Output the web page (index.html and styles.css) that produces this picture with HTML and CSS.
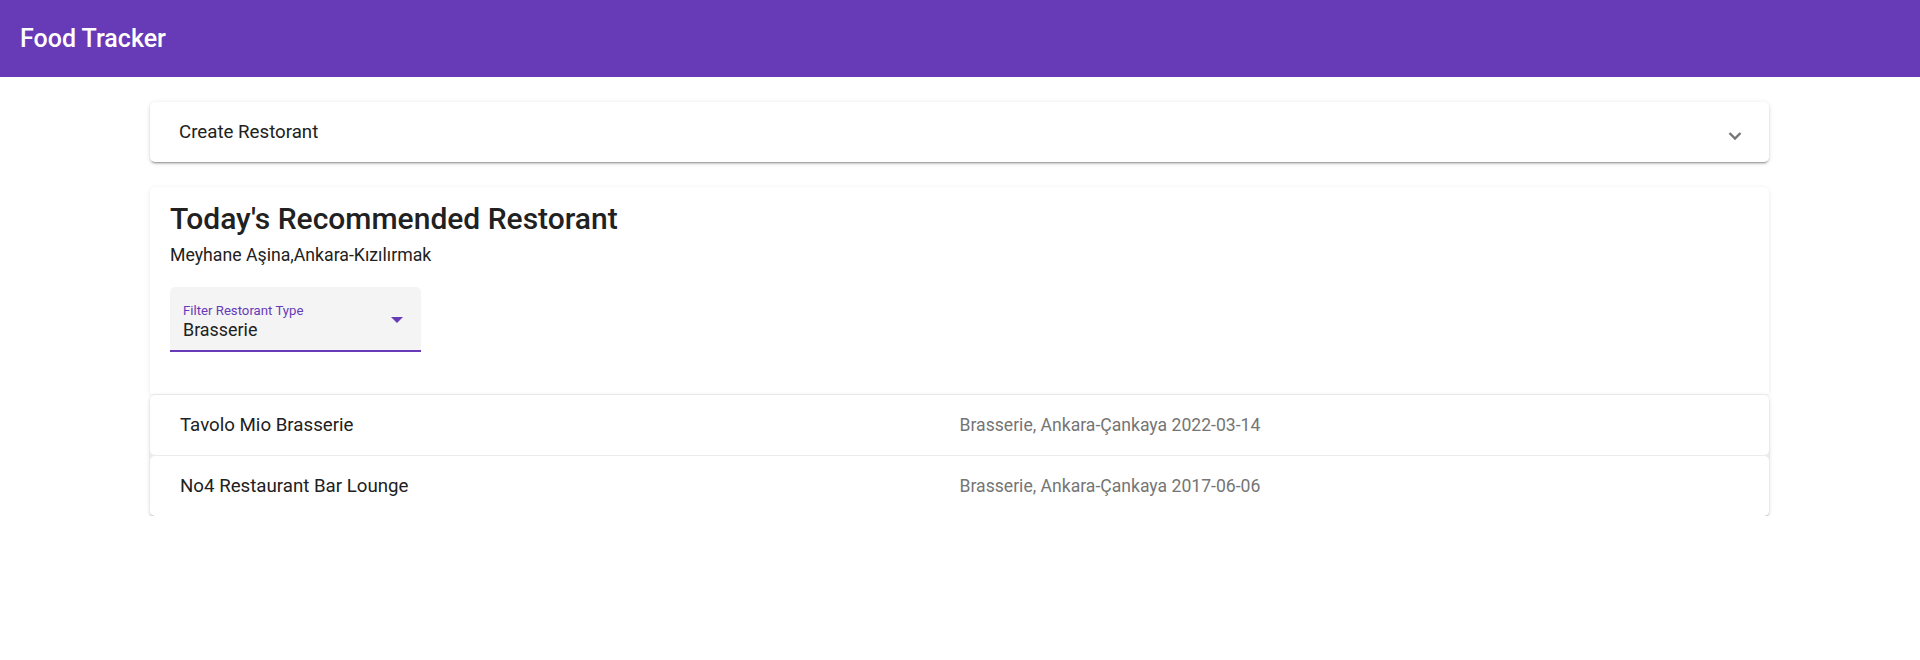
FILE: index.html
```html
<!DOCTYPE html>
<html lang="en">
<head>
<meta charset="utf-8">
<title>Food Tracker</title>
<link rel="stylesheet" href="styles.css">
</head>
<body>
<header class="toolbar">
  <span class="app-title">Food Tracker</span>
</header>
<main class="content">
  <section class="panel create-panel">
    <span class="panel-title">Create Restorant</span>
    <svg class="chevron" width="14" height="10" viewBox="0 0 14 10" aria-hidden="true">
      <path d="M1.5 2 L7 7.5 L12.5 2" fill="none" stroke="#757575" stroke-width="2.4"/>
    </svg>
  </section>

  <section class="panel recommend-card">
    <h1 class="rec-title">Today's Recommended Restorant</h1>
    <p class="rec-sub">Meyhane Aşina,Ankara-Kızılırmak</p>
    <div class="select-field">
      <div class="select-inner">
        <span class="select-label">Filter Restorant Type</span>
        <span class="select-value">Brasserie</span>
      </div>
      <svg class="select-arrow" width="12" height="6" viewBox="0 0 12 6" aria-hidden="true">
        <path d="M0 0 L12 0 L6 6 Z" fill="#673ab7"/>
      </svg>
    </div>
  </section>

  <div class="list">
    <div class="row">
      <span class="row-name">Tavolo Mio Brasserie</span>
      <span class="row-meta">Brasserie, Ankara-Çankaya 2022-03-14</span>
    </div>
    <div class="row">
      <span class="row-name">No4 Restaurant Bar Lounge</span>
      <span class="row-meta">Brasserie, Ankara-Çankaya 2017-06-06</span>
    </div>
  </div>
</main>
</body>
</html>
```

FILE: styles.css
```css
* { box-sizing: border-box; }

body {
  margin: 0;
  font-family: Roboto, "Noto Sans", sans-serif;
  color: #212121;
  background: #ffffff;
}

.toolbar {
  height: 77px;
  background: #673ab7;
  display: flex;
  align-items: center;
  padding: 0 20px;
}

.app-title {
  color: #ffffff;
  font-size: 25px;
  font-weight: 500;
}

.content {
  padding: 25px 151px 0 150px;
}

.panel {
  background: #ffffff;
  border-radius: 5px;
  box-shadow: 0 3px 1px -2px rgba(0,0,0,.2), 0 2px 2px 0 rgba(0,0,0,.14), 0 1px 5px 0 rgba(0,0,0,.12);
}

.create-panel {
  height: 60px;
  display: flex;
  align-items: center;
  justify-content: space-between;
  padding: 0 27px 0 29px;
}

.panel-title {
  font-size: 18.7px;
}

.chevron {
  margin-top: 7px;
}

.recommend-card {
  margin-top: 25px;
  padding: 12px 20px 42px;
  border-radius: 5px 5px 0 0;
  box-shadow: 0 1px 4px 0 rgba(0,0,0,.10);
}

.rec-title {
  margin: 0;
  font-size: 30px;
  font-weight: 500;
  line-height: 40px;
}

.rec-sub {
  margin: 5px 0 0;
  font-size: 17.7px;
  line-height: 22px;
}

.select-field {
  margin-top: 21px;
  width: 251px;
  height: 65px;
  background: #f4f4f4;
  border-radius: 5px 5px 0 0;
  border-bottom: 2px solid #673ab7;
  display: flex;
  align-items: center;
  justify-content: space-between;
  padding: 6px 18px 0 13px;
}

.select-inner {
  display: flex;
  flex-direction: column;
}

.select-label {
  font-size: 13.2px;
  color: #673ab7;
  line-height: 16px;
}

.select-value {
  font-size: 17.9px;
  line-height: 22px;
}

.select-arrow {
  margin-top: -4px;
}

.list {
  display: flex;
  flex-direction: column;
  gap: 1px;
  margin-top: 1px;
  background: #ececec;
  border-radius: 5px;
  box-shadow: 0 3px 1px -2px rgba(0,0,0,.2), 0 2px 2px 0 rgba(0,0,0,.14), 0 1px 5px 0 rgba(0,0,0,.12);
}

.row {
  height: 60px;
  display: grid;
  grid-template-columns: 1fr 1fr;
  align-items: center;
  padding: 0 30px;
  font-size: 18.7px;
  background: #ffffff;
  border-radius: 5px;
}

.row-meta {
  color: #757575;
  font-size: 17.6px;
}
```
